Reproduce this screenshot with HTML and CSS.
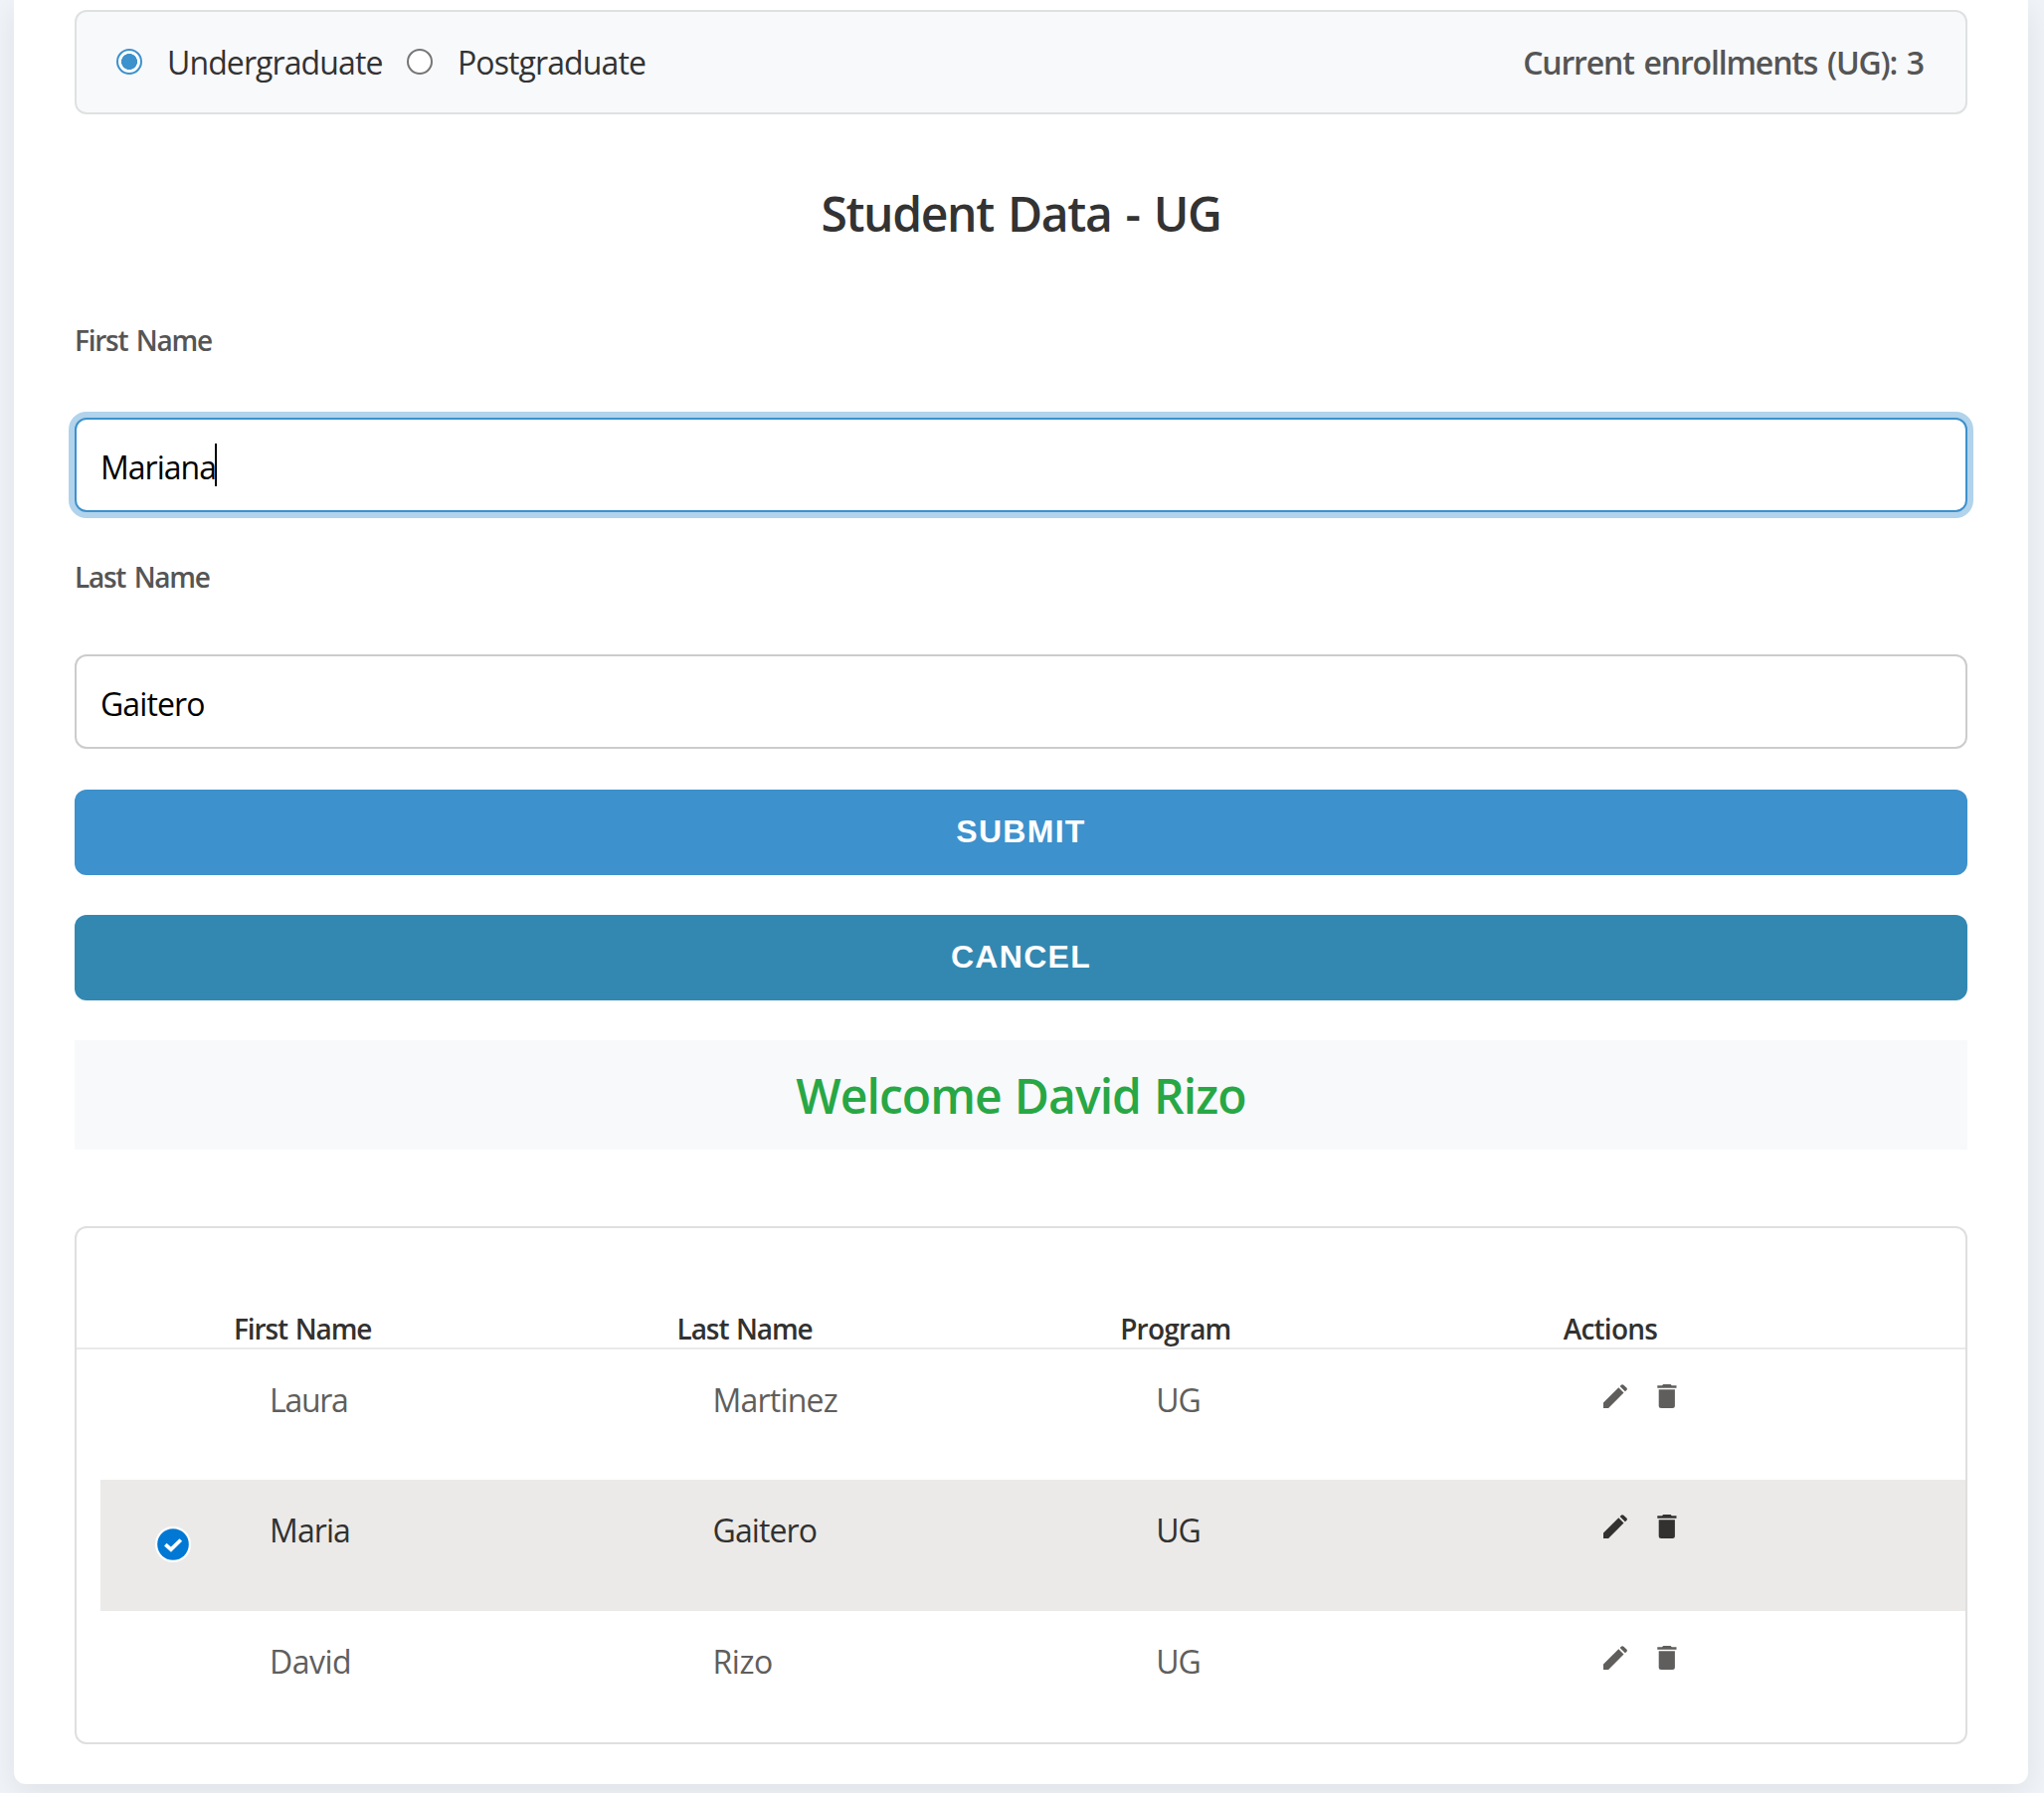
FILE: index.html
```html
<!DOCTYPE html>
<html lang="en">
<head>
<meta charset="utf-8">
<title>Student enrollment</title>
<link rel="stylesheet" href="styles.css">
</head>
<body>
<svg width="0" height="0" class="sprite">
  <symbol id="edit" viewBox="0 0 24 24">
    <path d="M0 24V18.6L15.3 3.3L20.5 8.5L5.1 24Z"/>
    <path d="M16.6 2L18.2.5Q19.2-.3 20.4.7L23.3 3.6Q24.4 4.7 23.5 5.8L21.9 7.3Z"/>
  </symbol>
  <symbol id="trash" viewBox="0 0 20 24">
    <path d="M.3 1.3H5L6.2 0H13.6L14.8 1.3H19.5V3.8H.3Z"/>
    <path d="M1.7 5.2H17.9V21.5Q17.9 24 15.4 24H4.2Q1.7 24 1.7 21.5Z"/>
  </symbol>
</svg>
<main class="card">
  <section class="program">
    <div class="option option-first"><span class="radio checked"></span><span>Undergraduate</span></div>
    <div class="option"><span class="radio"></span><span>Postgraduate</span></div>
    <div class="count">Current enrollments (UG): 3</div>
  </section>

  <h2 class="title">Student Data - UG</h2>

  <form class="form">
    <div class="label">First Name</div>
    <div class="field focused"><span class="mariana">Mariana</span><span class="caret"></span></div>
    <div class="label">Last Name</div>
    <div class="field">Gaitero</div>
    <button type="button" class="button submit">SUBMIT</button>
    <button type="button" class="button cancel">CANCEL</button>
  </form>

  <div class="welcome">Welcome David Rizo</div>

  <section class="list">
    <div class="head">
      <span></span><span>First Name</span><span>Last Name</span><span>Program</span><span>Actions</span>
    </div>
    <div class="row row-first">
      <span></span><span class="cell laura">Laura</span><span class="cell martinez">Martinez</span><span class="cell">UG</span>
      <span class="actions"><svg class="edit"><use href="#edit"/></svg><svg class="trash"><use href="#trash"/></svg></span>
    </div>
    <div class="row selected">
      <span class="check"><svg viewBox="0 0 36 36" width="36" height="36"><circle cx="18" cy="18" r="18" fill="#fff"/><circle cx="18" cy="18" r="15.8" fill="#0078d4"/><path d="M10.3 18.2L15.9 23.2L25.8 13.5" fill="none" stroke="#fff" stroke-width="3.8"/></svg></span>
      <span class="cell">Maria</span><span class="cell">Gaitero</span><span class="cell">UG</span>
      <span class="actions"><svg class="edit"><use href="#edit"/></svg><svg class="trash"><use href="#trash"/></svg></span>
    </div>
    <div class="row">
      <span></span><span class="cell david">David</span><span class="cell david">Rizo</span><span class="cell">UG</span>
      <span class="actions"><svg class="edit"><use href="#edit"/></svg><svg class="trash"><use href="#trash"/></svg></span>
    </div>
  </section>
</main>
</body>
</html>
```
FILE: styles.css
```css
* { box-sizing: border-box; }
html { height: 100%; overflow: hidden; }
body {
  margin: 0;
  height: 1803px;
  overflow: hidden;
  background: #f0f4f8;
  color: #333;
  font: 400 32px/44px "Open Sans", "Noto Sans", sans-serif;
  letter-spacing: -0.9px;
}
.sprite { display: none; }
.card {
  height: 1794px;
  margin: 0 16px 0 14px;
  padding: 10px 61px 0;
  background: #fff;
  border-radius: 0 0 12px 12px;
  box-shadow: 0 8px 32px rgba(0, 0, 0, .08);
}

.program {
  display: flex;
  align-items: center;
  height: 105px;
  padding: 1px 42px 0 40px;
  border: 2px solid #dfe1e1;
  border-radius: 12px;
  background: #f8f9fb;
}
.option { display: flex; align-items: center; gap: 25px; }
.option-first { width: 292px; }
.radio {
  width: 26px;
  height: 26px;
  margin-bottom: 3px;
  border: 2px solid #767676;
  border-radius: 50%;
  background: #fff;
}
.radio.checked {
  border-color: #3d91cc;
  background: radial-gradient(circle, #3d91cc 7.7px, #fff 8.3px);
}
.count {
  margin-left: auto;
  color: #555;
  font-weight: 600;
  letter-spacing: -1.15px;
  word-spacing: 2.5px;
}

.title {
  margin: 68px 0 76px;
  font-size: 48px;
  line-height: 64px;
  font-weight: 600;
  letter-spacing: -1.35px;
  word-spacing: 3px;
  text-align: center;
}

.form { display: flex; flex-direction: column; }
.label {
  margin-bottom: 59px;
  color: #555;
  font-size: 28px;
  line-height: 38px;
  font-weight: 600;
  letter-spacing: -1.25px;
  word-spacing: 2.5px;
}
.field {
  display: flex;
  align-items: center;
  height: 95px;
  padding: 4px 23px 0 24px;
  border: 2px solid #ccc;
  border-radius: 12px;
  background: #fff;
  color: #000;
}
.field.focused {
  margin-bottom: 46px;
  border-color: #3d91cc;
  box-shadow: 0 0 0 6px #b1d3ec;
}
.mariana { width: 115px; letter-spacing: -1px; }
.caret { width: 2px; height: 43px; margin-bottom: 5px; background: #000; }
.button {
  height: 86px;
  padding: 0 0 3px;
  border: 0;
  border-radius: 12px;
  color: #fff;
  font: 700 32px/36px "Liberation Sans", Arial, sans-serif;
  letter-spacing: 1.3px;
}
.submit { margin-top: 41px; background: #3d91cc; }
.cancel { margin-top: 40px; background: #3388b1; }

.welcome {
  height: 110px;
  margin: 40px 0 77px;
  padding-top: 1px;
  background: #f8f9fb;
  color: #28a745;
  font-size: 48px;
  line-height: 109px;
  font-weight: 600;
  letter-spacing: -0.94px;
  word-spacing: 1.5px;
  text-align: center;
}

.list {
  height: 521px;
  border: 2px solid #dfdfdf;
  border-radius: 12px;
}
.head {
  display: grid;
  grid-template-columns: 158px repeat(3, 445.6px) 1fr;
  align-items: end;
  height: 122px;
  border-bottom: 2px solid #eaeaea;
  color: #323130;
  font-size: 28px;
  line-height: 38px;
  font-weight: 600;
  letter-spacing: -1.1px;
  word-spacing: 1.5px;
}
.head span:nth-child(n+4) { letter-spacing: -0.8px; }
.row {
  display: grid;
  grid-template-columns: 133px repeat(3, 445.6px) 1fr;
  align-items: start;
  height: 132px;
  margin-left: 24px;
  color: #605e5c;
  fill: #605e5c;
}
.row-first { height: 131px; }
.selected { background: #ebeae8; color: #323130; fill: #323130; }
.cell { padding: 29px 0 0 37px; }
.laura { letter-spacing: -1.3px; }
.martinez { letter-spacing: -0.8px; }
.david { letter-spacing: -0.5px; }
.actions { display: flex; gap: 30px; padding: 35px 0 0 41px; }
.edit { width: 24px; height: 24px; }
.trash { width: 20px; height: 24px; }
.check { display: flex; padding: 47px 0 0 55px; }
```
